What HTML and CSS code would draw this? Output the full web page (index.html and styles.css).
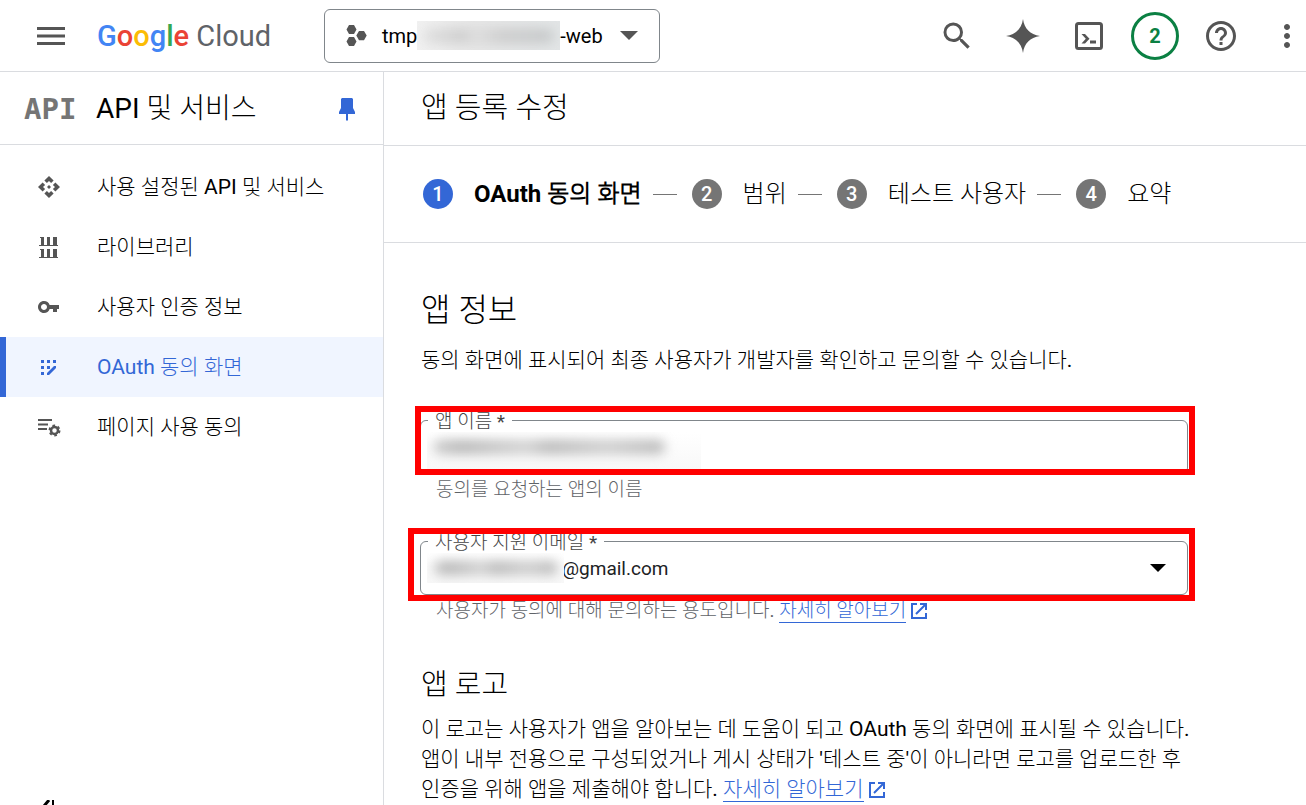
FILE: index.html
```html
<!DOCTYPE html>
<html lang="ko">
<head>
    <meta charset="UTF-8">
    <meta name="viewport" content="width=device-width, initial-scale=1.0">
    <title>앱 등록 수정 - Google Cloud</title>
    <link rel="stylesheet" href="styles.css">
</head>
<body>
    <!-- Top bar -->
    <header class="topbar">
        <button class="icon-button menu-button" aria-label="메뉴">
            <svg width="28" height="20" viewBox="0 0 28 20"><path d="M0 1h28v3H0zM0 8.500h28v3H0zM0 16h28v3H0z"/></svg>
        </button>
        <a class="brand" href="#"><span class="google"><span class="g-blue">G</span><span class="g-red">o</span><span class="g-yellow">o</span><span class="g-blue">g</span><span class="g-green">l</span><span class="g-red">e</span></span> Cloud</a>
        <button class="project-picker">
            <svg width="22" height="22" viewBox="0 0 22 22"><path d="M3 0h5l2.500 4.500L8 9H3L.5 4.500zM3 12h5l2.500 4.500L8 21H3L.5 16.500zM13 6h5l2.700 4.600L18 15.200h-5l-2.700-4.600z"/></svg>
            <span class="project-name">tmp<span class="mask mask-project"><span class="smudge"></span></span>-web</span>
            <svg class="caret" width="18" height="9" viewBox="0 0 18 9"><path d="M0 0h18L9 9z"/></svg>
        </button>
        <div class="actions">
            <button class="icon-button" aria-label="검색">
                <svg width="36" height="36" viewBox="0 0 24 24"><path d="M15.500 14h-.79l-.28-.27A6.471 6.471 0 0 0 16 9.500 6.500 6.500 0 1 0 9.500 16c1.610 0 3.090-.59 4.230-1.570l.27.28v.79l5 4.990L20.490 19l-4.990-5zm-6 0C7.010 14 5 11.990 5 9.500S7.010 5 9.500 5 14 7.010 14 9.500 11.990 14 9.500 14z"/></svg>
            </button>
            <button class="icon-button" aria-label="Gemini">
                <svg width="34" height="34" viewBox="0 0 34 34"><path d="M17 0c1.300 9.500 7 15.500 17 17-10 1.500-15.700 7.500-17 17C15.700 24.500 10 18.500 0 17 10 15.500 15.700 9.500 17 0z"/></svg>
            </button>
            <button class="icon-button" aria-label="Cloud Shell">
                <svg width="28" height="28" viewBox="0 0 28 28"><rect x="1.500" y="1.500" width="25" height="25" rx="2" fill="none" stroke="#555" stroke-width="3"/><path d="M6.500 12h3.500l4.500 4.700L10 21.500H6.500l4.300-4.800zM15 18.500h6v3h-6z"/></svg>
            </button>
            <button class="notice" aria-label="알림 2개">2</button>
            <button class="icon-button" aria-label="도움말">
                <svg width="36" height="36" viewBox="0 0 24 24"><path d="M11 18h2v-2h-2v2zm1-16C6.480 2 2 6.480 2 12s4.480 10 10 10 10-4.480 10-10S17.520 2 12 2zm0 18c-4.410 0-8-3.590-8-8s3.590-8 8-8 8 3.590 8 8-3.590 8-8 8zm0-14c-2.210 0-4 1.790-4 4h2c0-1.100.9-2 2-2s2 .9 2 2c0 2-3 1.750-3 5h2c0-2.250 3-2.500 3-5 0-2.210-1.790-4-4-4z"/></svg>
            </button>
            <button class="icon-button" aria-label="더보기">
                <svg width="36" height="36" viewBox="0 0 24 24"><path d="M12 8c1.100 0 2-.9 2-2s-.9-2-2-2-2 .9-2 2 .9 2 2 2zm0 2c-1.100 0-2 .9-2 2s.9 2 2 2 2-.9 2-2-.9-2-2-2zm0 6c-1.100 0-2 .9-2 2s.9 2 2 2 2-.9 2-2-.9-2-2-2z"/></svg>
            </button>
        </div>
    </header>

    <div class="layout">
        <!-- Sidebar -->
        <aside class="sidebar">
            <div class="sidebar-title">
                <span class="api-logo">API</span>
                <h2>API 및 서비스</h2>
                <button class="pin" aria-label="고정">
                    <svg width="18" height="24" viewBox="0 0 18 24"><path d="M4 1h10l1 1v9l2 4v2h-7v6l-1 1-1-1v-6H1v-2l2-4V2z"/></svg>
                </button>
            </div>
            <nav class="nav">
                <a href="#">
                    <svg width="24" height="24" viewBox="0 0 24 24"><path d="M14 12l-2 2-2-2 2-2 2 2zm-2-6l2.120 2.120 2.500-2.500L12 1 7.380 5.620l2.500 2.500L12 6zm-6 6l2.120-2.120-2.500-2.500L1 12l4.620 4.620 2.500-2.500L6 12zm12 0l-2.120 2.120 2.500 2.500L23 12l-4.620-4.620-2.500 2.500L18 12zm-6 6l-2.120-2.120-2.500 2.500L12 23l4.620-4.620-2.500-2.500L12 18z"/></svg>
                    사용 설정된 API 및 서비스
                </a>
                <a href="#">
                    <svg width="24" height="24" viewBox="0 0 24 24"><path d="M3 2h4v8h3V2h3v8h3V2h4v8h1v1H2v-1h2V3H3zM3 14h4v8h3v-8h3v8h3v-8h4v8h1v1H2v-1h2v-7H3z"/></svg>
                    라이브러리
                </a>
                <a href="#">
                    <svg width="24" height="24" viewBox="0 0 24 24"><path d="M12.650 10A5.990 5.990 0 0 0 7 6c-3.310 0-6 2.690-6 6s2.690 6 6 6a5.990 5.990 0 0 0 5.650-4H16v3h4v-3h2v-4h-9.350zM7 15c-1.650 0-3-1.350-3-3s1.350-3 3-3 3 1.350 3 3-1.350 3-3 3z"/></svg>
                    사용자 인증 정보
                </a>
                <a href="#" class="active">
                    <svg width="24" height="24" viewBox="0 0 24 24"><path d="M4 5h3v3H4zM10 5h3v3h-3zM16 5h3v3h-3zM4 11h3v3H4zM10 11h3v3h-3zM4 17h3v3H4zM10 20v-2l7-7h2v2l-7 7z"/></svg>
                    OAuth 동의 화면
                </a>
                <a href="#">
                    <svg width="24" height="24" viewBox="0 0 24 24"><path d="M1 4h14v2H1zM1 8.500h10v2H1zM1 13h9v2H1z"/><circle cx="17.500" cy="15.500" r="3.500" fill="none" stroke="#555" stroke-width="2.500"/><circle cx="17.500" cy="15.500" r="5" fill="none" stroke="#555" stroke-width="2" stroke-dasharray="2.600 2.636"/></svg>
                    페이지 사용 동의
                </a>
            </nav>
            <button class="collapse" aria-label="메뉴 접기">
                <svg width="14" height="18" viewBox="0 0 14 18"><path d="M8 0L1 8.500 8 17" fill="none" stroke="#000" stroke-width="3"/><path d="M11 0h2v18h-2z"/></svg>
            </button>
        </aside>

        <!-- Content -->
        <main class="main">
            <h1 class="page-title">앱 등록 수정</h1>

            <ol class="stepper">
                <li class="current"><span class="num">1</span>OAuth 동의 화면</li>
                <li><span class="num">2</span>범위</li>
                <li><span class="num">3</span>테스트 사용자</li>
                <li><span class="num">4</span>요약</li>
            </ol>

            <form class="form">
                <h2>앱 정보</h2>
                <p>동의 화면에 표시되어 최종 사용자가 개발자를 확인하고 문의할 수 있습니다.</p>

                <div class="field field-name">
                    <label for="appName">앱 이름 *</label>
                    <input type="text" id="appName">
                    <span class="mask mask-name"><span class="smudge"></span></span>
                    <span class="marker"></span>
                </div>
                <div class="hint">동의를 요청하는 앱의 이름</div>

                <div class="field field-email">
                    <label for="supportEmail">사용자 지원 이메일 *</label>
                    <select id="supportEmail">
                        <option>@gmail.com</option>
                    </select>
                    <span class="mask mask-email"><span class="smudge"></span></span>
                    <svg class="select-arrow" width="16" height="8" viewBox="0 0 16 8"><path d="M0 0h16L8 8z"/></svg>
                    <span class="marker"></span>
                </div>
                <div class="hint">사용자가 동의에 대해 문의하는 용도입니다. <a href="#">자세히 알아보기</a> <svg class="open-icon" width="16" height="16" viewBox="0 0 16 16"><path d="M6 1H1v14h14v-5M9 1h6v6M15 1L5 11"/></svg></div>

                <h3>앱 로고</h3>
                <p>이 로고는 사용자가 앱을 알아보는 데 도움이 되고 OAuth 동의 화면에 표시될 수 있습니다. 앱이 내부 전용으로 구성되었거나 게시 상태가 '테스트 중'이 아니라면 로고를 업로드한 후 인증을 위해 앱을 제출해야 합니다. <a href="#">자세히 알아보기</a> <svg class="open-icon" width="16" height="16" viewBox="0 0 16 16"><path d="M6 1H1v14h14v-5M9 1h6v6M15 1L5 11"/></svg></p>
            </form>
        </main>
    </div>
</body>
</html>
```

FILE: styles.css
```css
* {
    box-sizing: border-box;
}
body {
    font-family: Roboto, "Noto Sans CJK KR Light", "Noto Sans CJK KR DemiLight", "Noto Sans CJK KR", sans-serif;
    font-size: 21px;
    line-height: 30px;
    color: #000;
    background: #fff;
    margin: 0;
    height: 100vh;
    display: flex;
    flex-direction: column;
    overflow: hidden;
}
h1, h2, h3, p, ol {
    margin: 0;
    padding: 0;
    font-weight: 400;
}
button {
    font-family: inherit;
    background: none;
    border: none;
    padding: 0;
    cursor: pointer;
}
svg {
    fill: #555;
    flex: none;
}

/* top bar */
.topbar {
    display: flex;
    align-items: center;
    height: 72px;
    flex: none;
    padding-left: 27px;
    border-bottom: 1px solid #dadce0;
}
.icon-button {
    width: 48px;
    height: 48px;
    display: flex;
    align-items: center;
    justify-content: center;
}
.brand {
    width: 227px;
    padding-left: 22px;
    font-size: 29px;
    color: #5f6368;
    text-decoration: none;
    white-space: nowrap;
}
.google {
    font-weight: 500;
}
.g-blue {
    color: #4285f4;
}
.g-red {
    color: #ea4335;
}
.g-yellow {
    color: #fbbc04;
}
.g-green {
    color: #34a853;
}
.project-picker {
    display: flex;
    align-items: center;
    height: 54px;
    margin-left: 22px;
    padding: 0 21px;
    border: 1px solid #80868b;
    border-radius: 6px;
    font-size: 20px;
    color: #000;
}
.project-name {
    display: flex;
    align-items: center;
    margin: 0 17px 0 14px;
}
.actions {
    display: flex;
    align-items: center;
    gap: 18px;
    margin-left: auto;
    margin-right: -5px;
}
.notice {
    width: 48px;
    height: 48px;
    border: 3px solid #0b8043;
    border-radius: 50%;
    font-size: 20px;
    font-weight: 700;
    color: #0b8043;
}

/* blurred private values */
.mask {
    display: block;
    overflow: hidden;
    background: linear-gradient(#fff, #f8f8f8);
}
.smudge {
    display: block;
    height: 14px;
    margin: 8px 6px;
    border-radius: 7px;
    background: linear-gradient(90deg, #ccc, #b5b5b5 12%, #d0d0d0 40%, #b8b8b8 50%, #ccc 75%, #b8b8b8);
    filter: blur(6px);
}
.mask-project {
    width: 143px;
    height: 29px;
    background: linear-gradient(90deg, #f1f1f1, #e6e6e6 40%, #e2e5e6);
}
.mask-project .smudge {
    background: linear-gradient(90deg, #e0e0e0, #ccc 30%, #ddd 40%, #ccc 60%, #c5c8c9);
}

/* sidebar */
.layout {
    display: flex;
    flex: 1;
    min-height: 0;
}
.sidebar {
    width: 384px;
    flex: none;
    display: flex;
    flex-direction: column;
    border-right: 1px solid #dadce0;
}
.sidebar-title {
    display: flex;
    align-items: center;
    height: 73px;
    flex: none;
    padding: 2px 27px 0 24px;
    border-bottom: 1px solid #dadce0;
}
.sidebar-title h2 {
    font-size: 28px;
}
.api-logo {
    width: 72px;
    font-family: "DejaVu Sans Mono", monospace;
    font-size: 29px;
    font-weight: 700;
    color: #757575;
}
.pin {
    display: flex;
    margin-left: auto;
}
.pin svg {
    fill: #3367d6;
}
.nav {
    padding-top: 12px;
}
.nav a {
    display: flex;
    align-items: center;
    gap: 36px;
    height: 60px;
    padding-left: 37px;
    color: #000;
    text-decoration: none;
}
.nav .active {
    padding-left: 31px;
    border-left: 6px solid #3367d6;
    background: #f0f5ff;
    color: #3367d6;
}
.nav .active svg {
    fill: #3367d6;
}
.collapse {
    display: flex;
    margin: auto 0 -13px 41px;
}
.collapse svg {
    fill: #000;
}

/* content */
.main {
    flex: 1;
    overflow: hidden;
}
.page-title {
    height: 74px;
    padding: 21px 37px;
    font-size: 29px;
    border-bottom: 1px solid #dadce0;
}
.stepper {
    display: flex;
    align-items: center;
    height: 97px;
    padding-left: 39px;
    border-bottom: 1px solid #dadce0;
    font-size: 24px;
    list-style: none;
    white-space: nowrap;
}
.stepper li {
    display: flex;
    align-items: center;
}
.stepper li + li::before {
    content: "";
    width: 24px;
    height: 1px;
    margin: 0 15px 0 11px;
    background: #757575;
}
.stepper .current {
    font-weight: 700;
}
.num {
    width: 30px;
    height: 30px;
    margin-right: 21px;
    border-radius: 50%;
    background: #757575;
    color: #fff;
    font-size: 20px;
    font-weight: 500;
    text-align: center;
}
.current .num {
    background: #3367d6;
}
.form {
    max-width: 842px;
    padding: 47px 38px 0 37px;
    word-break: keep-all;
}
.form p {
    margin-right: -12px;
}
.form h2 {
    margin-bottom: 15px;
    font-size: 32px;
    line-height: 40px;
}
.form h3 {
    margin: 44px 0 11px;
    font-size: 29px;
    line-height: 36px;
}
.form a {
    color: #3367d6;
    text-decoration: none;
    border-bottom: 1px solid #3367d6;
}
.field {
    position: relative;
    margin: 39px 0 0 -1px;
}
.field-name {
    margin-top: 45px;
}
.field label {
    position: absolute;
    left: 8px;
    top: -10px;
    padding: 0 7px;
    font-size: 19px;
    line-height: 24px;
    color: #444;
    background: #fff;
}
.field input,
.field select {
    display: block;
    width: 100%;
    height: 54px;
    padding: 0 14px;
    border: 1px solid #80868b;
    border-radius: 6px;
    background: #fff;
    font-family: inherit;
    font-size: 19px;
    color: #202124;
    appearance: none;
}
.field select {
    padding-left: 141px;
}
.field .mask {
    position: absolute;
    left: 7px;
    top: 12px;
}
.mask-name {
    width: 274px;
    height: 38px;
}
.mask-name .smudge {
    width: 232px;
}
.mask-email {
    width: 137px;
    height: 30px;
}
.select-arrow {
    position: absolute;
    right: 22px;
    top: 23px;
    fill: #000;
}
.marker {
    position: absolute;
    top: -14px;
    right: -7px;
    bottom: -1px;
    left: -5px;
    border: 6px solid #f00;
    pointer-events: none;
}
.field-email .marker {
    top: -13px;
    bottom: -6px;
    left: -12px;
}
.hint {
    padding: 4px 0 0 15px;
    font-size: 19px;
    line-height: 24px;
    color: #5f6368;
}
.open-icon {
    fill: none;
    stroke: #3367d6;
    stroke-width: 2;
    vertical-align: -2px;
}
```
